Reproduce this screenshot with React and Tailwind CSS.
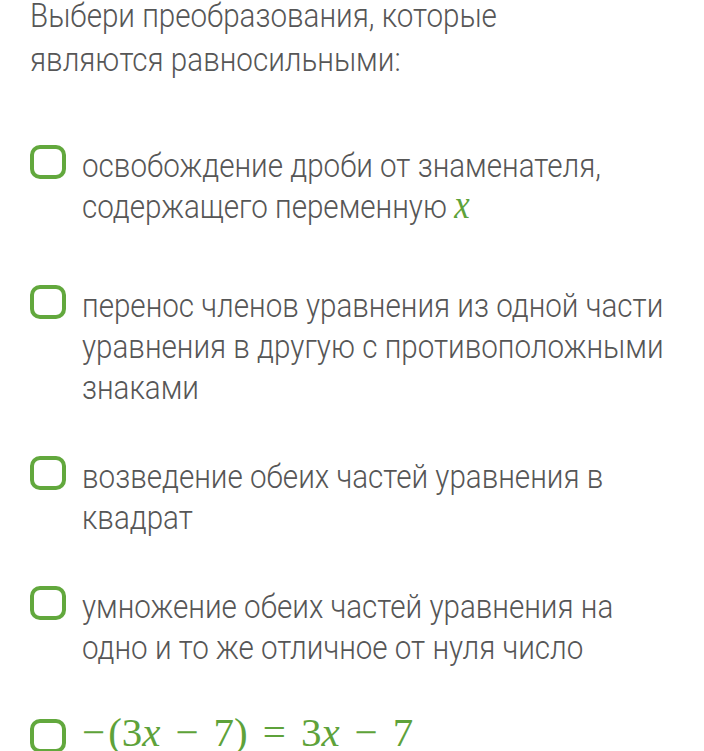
import React from "react";

// Roboto Condensed isn't installed, so Roboto Light is narrowed with scale-x
const options = [
  {
    text: (
      <>
        освобождение дроби от знаменателя, содержащего переменную{" "}
        <span className="font-['Liberation_Serif',serif] italic text-[40px] leading-[30px] text-[#5ea23a]">x</span>
      </>
    ),
  },
  { text: "перенос членов уравнения из одной части уравнения в другую с противоположными знаками" },
  { text: "возведение обеих частей уравнения в квадрат" },
  { text: "умножение обеих частей уравнения на одно и то же отличное от нуля число" },
];

const CheckBox = () => (
  <div className="shrink-0 w-[36px] h-[34px] rounded-[10px] border-[4px] border-[#62a83d] bg-white" />
);

export default function App() {
  return (
    <div className="min-h-screen bg-white overflow-hidden font-['Roboto',sans-serif] font-light text-[#565656]">
      <div className="pl-[30px]">
        <h1 className="-mt-[7px] w-[690px] origin-left scale-x-[0.87] text-[34px] leading-[44px] font-light">
          Выбери преобразования, которые
          <br />
          являются равносильными:
        </h1>

        <div className="mt-[64px] flex flex-col gap-[48px]">
          {options.map((o, i) => (
            <div key={i} className={i === 0 ? "flex items-start gap-[16px] mb-[10px]" : "flex items-start gap-[16px]"}>
              <CheckBox />
              <p className="shrink-0 w-[686px] origin-left scale-x-[0.87] text-[34px] leading-[41px]">{o.text}</p>
            </div>
          ))}
          <div className="flex items-start gap-[16px] mt-[3px]">
            <CheckBox />
            <p className="-mt-[7px] text-[41px] leading-[41px] text-[#5ea23a] font-['Liberation_Serif',serif] font-normal whitespace-nowrap">
              <span className="mr-[3px]">−</span>(3<span className="italic">x</span>
              <span className="mx-[15px]">−</span>7)
              <span className="mx-[15px]">=</span>3<span className="italic">x</span>
              <span className="mx-[15px]">−</span>7
            </p>
          </div>
        </div>
      </div>
    </div>
  );
}
